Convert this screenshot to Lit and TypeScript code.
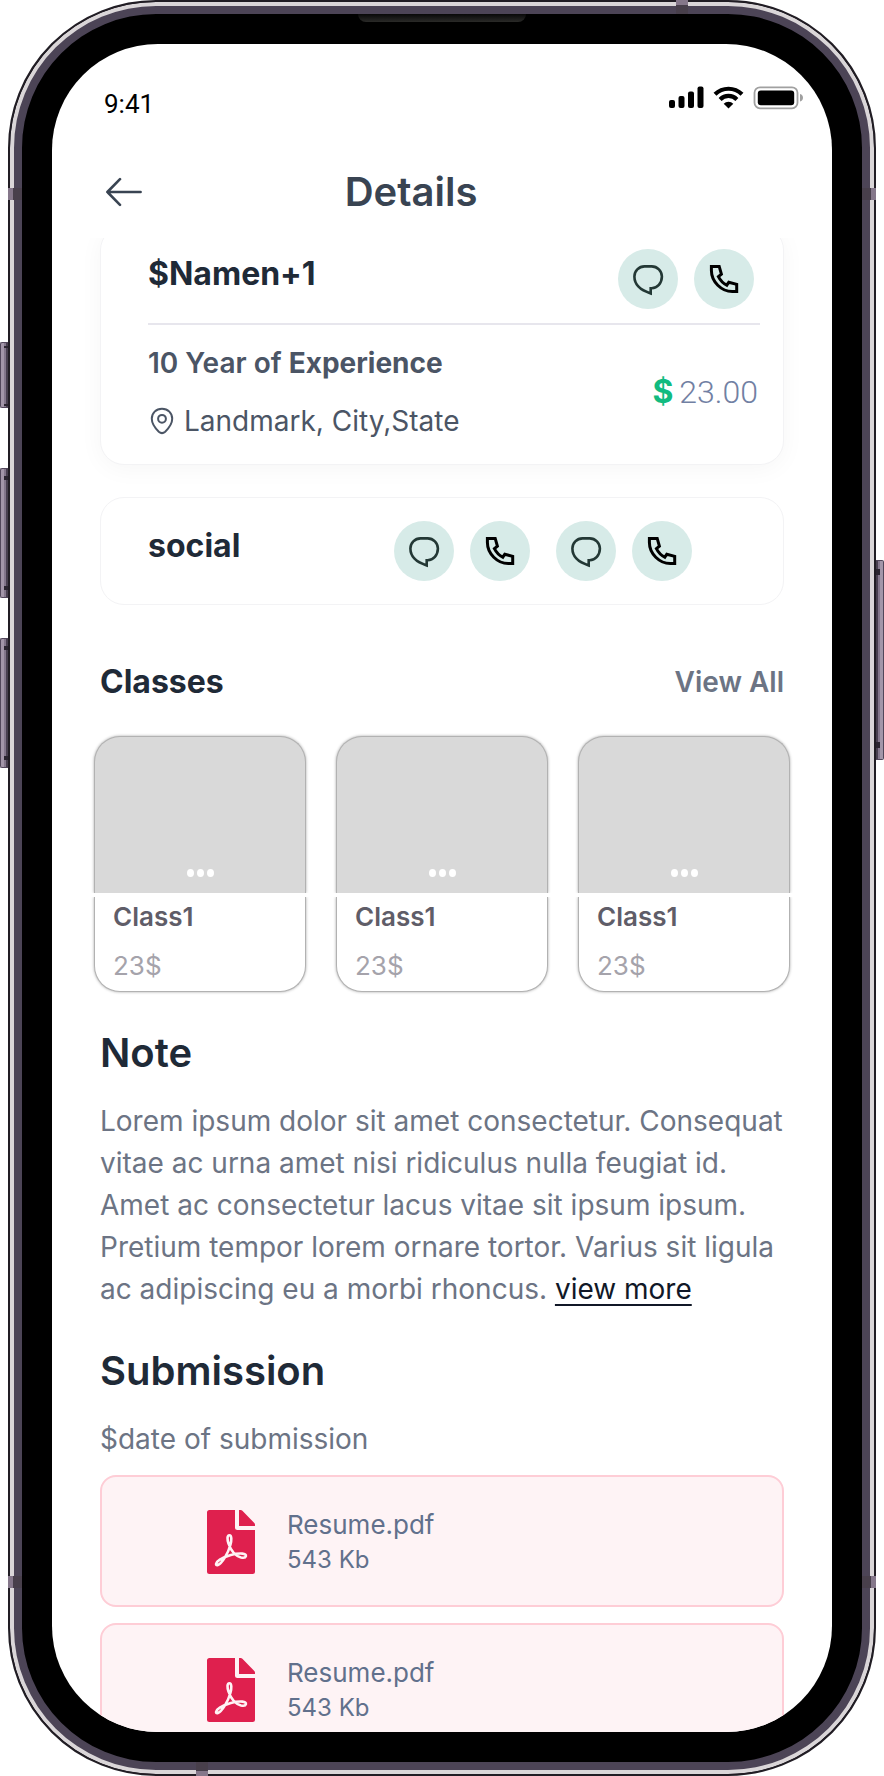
import { LitElement, html, css, svg } from "lit";
import { customElement, property } from "lit/decorators.js";

const chatGlyph = svg`<path
  d="M26.5 17.4h7.2a10.3 10.3 0 0 1 10.2 10.2c0 6.6-4.6 11.4-10.2 11.6h-1v5.2C23.5 41.6 16.4 36 16.4 27.6a10.1 10.1 0 0 1 10.1-10.2z"
  fill="none" stroke="#233835" stroke-width="2.6" />`;

const phoneGlyph = svg`<path
  d="M17.4 17.4h7.8l2.2 7.8-3 2.4c1.8 3.6 4.6 6.6 8.4 8.6l2-3 7.9 2.2v7.2h-4.4C27.4 42.6 17.4 32.8 17.4 21.6z"
  fill="none" stroke="#000" stroke-width="3" />`;

@customElement("contact-button")
export class ContactButton extends LitElement {
  @property() kind: "chat" | "phone" = "chat";

  static styles = css`
    :host {
      display: block;
    }
    .circle {
      display: block;
      width: 60px;
      height: 60px;
      padding: 0;
      border: 0;
      border-radius: 50%;
      background: #d7ebe8;
      cursor: pointer;
    }
    .glyph {
      display: block;
    }
  `;

  render() {
    const chat = this.kind === "chat";
    return html`<button class="circle" type="button" aria-label=${chat ? "Message" : "Call"}>
      <svg class="glyph" width="60" height="60" viewBox="0 0 60 60" aria-hidden="true">
        ${chat ? chatGlyph : phoneGlyph}
      </svg>
    </button>`;
  }
}

@customElement("class-card")
export class ClassCard extends LitElement {
  @property() name = "";
  @property() price = "";

  static styles = css`
    :host {
      display: block;
    }
    .thumb,
    .info {
      box-sizing: border-box;
      border: 1px solid #b2b2b2;
      box-shadow: 0 0 3px rgba(0, 0, 0, 0.35);
    }
    .thumb {
      display: flex;
      justify-content: center;
      align-items: flex-end;
      gap: 3px;
      height: 157px;
      padding-bottom: 16px;
      border-bottom: 0;
      border-radius: 26px 26px 0 0;
      background: #d9d9d9;
      clip-path: inset(-4px -4px 0 -4px);
    }
    .dot {
      width: 7px;
      height: 8px;
      border-radius: 50%;
      background: #fff;
    }
    .info {
      margin-top: 4px;
      padding: 0 18px 5px;
      border-top: 0;
      border-radius: 0 0 26px 26px;
      background: #fff;
      clip-path: inset(0 -4px -4px -4px);
    }
    .name,
    .price {
      margin: 0;
      font-size: 26px;
    }
    .name {
      line-height: 40px;
      font-weight: 600;
      color: #5f5d68;
    }
    .price {
      margin-top: 9px;
      line-height: 40px;
      color: #a5a3ab;
    }
  `;

  render() {
    return html`<div class="thumb">
        <span class="dot"></span><span class="dot"></span><span class="dot"></span>
      </div>
      <div class="info">
        <h3 class="name">${this.name}</h3>
        <p class="price">${this.price}</p>
      </div>`;
  }
}

@customElement("file-card")
export class FileCard extends LitElement {
  @property() name = "";
  @property() size = "";

  static styles = css`
    :host {
      display: block;
    }
    .file {
      display: flex;
      align-items: center;
      gap: 32px;
      box-sizing: border-box;
      padding: 30px 105px 28px;
      border: 2px solid #fecdd6;
      border-radius: 16px;
      background: #fef3f5;
      color: #61708c;
      text-decoration: none;
    }
    .label {
      display: flex;
      flex-direction: column;
    }
    .name {
      font-size: 26px;
      line-height: 36px;
    }
    .size {
      font-size: 24px;
      line-height: 34px;
    }
  `;

  render() {
    return html`<a class="file" href="#">
      <svg width="48" height="64" viewBox="0 0 48 64" aria-hidden="true">
        <path fill="#df204e" d="M2.5 0H28v17.5a2.5 2.5 0 0 0 2.5 2.5H48v41.5a2.5 2.5 0 0 1-2.5 2.5h-43A2.5 2.5 0 0 1 0 61.5v-59A2.5 2.5 0 0 1 2.5 0z" />
        <path fill="#df204e" d="M32 0h1.6c.7 0 1.3.3 1.8.8L47.3 13c.5.5.7 1.100.7 1.700V16H32z" />
        <path
          d="M22.4 25.200c-2.4 0-2.3 4.200-.9 8.400C23.800 40 28.500 46 34 47.400c5.800 1.300 6.800-3.400 1.400-3.800C28.500 43 19 45.800 12.800 49.600 8.400 52.400 8 56 10.900 55 15 53.500 21 43.500 23.400 35c1.300-5 1.400-9.800-1-9.800z"
          fill="none" stroke="#fef3f5" stroke-width="2.6" stroke-linejoin="round" />
      </svg>
      <span class="label">
        <span class="name">${this.name}</span>
        <span class="size">${this.size}</span>
      </span>
    </a>`;
  }
}

@customElement("app-root")
export class AppRoot extends LitElement {
  private classes = [
    { name: "Class1", price: "23$" },
    { name: "Class1", price: "23$" },
    { name: "Class1", price: "23$" },
  ];

  private files = [
    { name: "Resume.pdf", size: "543 Kb" },
    { name: "Resume.pdf", size: "543 Kb" },
  ];

  static styles = css`
    :host {
      display: block;
      position: relative;
      box-sizing: border-box;
      height: 100vh;
      padding: 0 8px;
      background: #fff;
      font-family: Inter, "Liberation Sans", sans-serif;
      color: #1f2a37;
    }

    /* Device body */
    .phone {
      box-sizing: border-box;
      height: 100%;
      padding: 42px;
      border: 2px solid #211d24;
      border-radius: 148px;
      background: #000;
      box-shadow:
        inset 0 0 0 4px #dad6d8,
        inset 0 0 0 12px #4c4456;
    }
    .screen {
      display: flex;
      flex-direction: column;
      height: 100%;
      overflow: hidden;
      border-radius: 106px;
      background: #fff;
    }
    .speaker {
      position: absolute;
      top: 14px;
      left: 50%;
      width: 168px;
      height: 8px;
      margin-left: -84px;
      border-radius: 0 0 8px 8px;
      background: linear-gradient(#080808, #2a2a28);
    }
    .band {
      position: absolute;
      background: linear-gradient(to right, #85778a 5px, #483f4b 5px);
    }
    .band.left,
    .band.right {
      width: 14px;
      height: 12px;
    }
    .band.left {
      left: 8px;
    }
    .band.right {
      right: 8px;
      background: linear-gradient(to left, #85778a 5px, #483f4b 5px);
    }
    .band.upper {
      top: 188px;
    }
    .band.lower {
      bottom: 188px;
    }
    .band.top,
    .band.bottom {
      width: 12px;
      height: 14px;
    }
    .band.top {
      top: 0;
      right: 196px;
      background: linear-gradient(to bottom, #85778a 5px, #483f4b 5px);
    }
    .band.bottom {
      bottom: 0;
      left: 196px;
      background: linear-gradient(to top, #85778a 5px, #483f4b 5px);
    }
    .key {
      position: absolute;
      box-sizing: border-box;
      width: 8px;
      border: 1px solid #51465a;
      border-radius: 2px 0 0 2px;
      border-right: 0;
      left: 0;
      background: linear-gradient(to right, #a396a9 3px, #83768b 3px, #83768b 5px, #483f4f 5px);
    }
    .key::before,
    .key::after {
      content: "";
      position: absolute;
      right: 0;
      width: 4px;
      height: 4px;
      background: #2b2530;
    }
    .key::before {
      top: 7px;
    }
    .key::after {
      bottom: 7px;
    }
    .key.mute {
      top: 342px;
      height: 66px;
    }
    .key.mute::before {
      top: 3px;
      height: 2px;
    }
    .key.mute::after {
      bottom: 1px;
      height: 2px;
    }
    .key.up {
      top: 468px;
      height: 130px;
    }
    .key.down {
      top: 638px;
      height: 130px;
    }
    .key.power {
      top: 560px;
      left: auto;
      right: 0;
      height: 200px;
      transform: scaleX(-1);
    }
    .key.power::before {
      top: 8px;
      height: 6px;
    }
    .key.power::after {
      bottom: 11px;
      height: 6px;
    }

    /* Status bar and header */
    .status {
      display: flex;
      justify-content: space-between;
      align-items: flex-start;
      padding: 40px 28px 0 52px;
      color: #000;
    }
    .time {
      font-family: Roboto, sans-serif;
      font-size: 26px;
      line-height: 40px;
    }
    .indicators {
      display: block;
      margin-top: 2px;
    }
    .header {
      display: flex;
      align-items: center;
      padding: 44px 152px 22px 54px;
      color: #394452;
    }
    .back {
      flex: none;
      width: 36px;
      height: 36px;
      padding: 0;
      border: 0;
      background: none;
      color: inherit;
      cursor: pointer;
    }
    .back svg {
      display: block;
    }
    .title {
      flex: 1;
      margin: 0;
      font-size: 40px;
      font-weight: 600;
      line-height: 48px;
      text-align: center;
    }

    /* Scrolled content */
    .content {
      flex: 1;
      min-height: 0;
      overflow: hidden;
      padding: 0 48px;
    }
    .card {
      border: 1px solid #f3f3f5;
      border-radius: 24px;
      background: #fff;
    }
    .profile {
      margin-top: -12px;
      padding: 22px 23px 22px 47px;
      box-shadow: 0 4px 24px rgba(0, 0, 0, 0.04);
    }
    .profile-head {
      display: flex;
      justify-content: space-between;
      align-items: center;
      padding: 0 6px 14px 0;
      border-bottom: 2px solid #e7e6ed;
    }
    .name {
      margin: 0;
      padding-bottom: 10px;
      font-size: 32px;
      font-weight: 700;
      line-height: 40px;
    }
    .pair {
      display: flex;
      gap: 16px;
    }
    .profile-body {
      display: flex;
      justify-content: space-between;
      align-items: center;
      padding-top: 17px;
      color: #4b5565;
      font-size: 28px;
      line-height: 42px;
    }
    .line {
      margin: 0;
    }
    .experience {
      font-weight: 600;
    }
    .experience strong {
      font-weight: 700;
    }
    .place {
      display: flex;
      align-items: center;
      gap: 10px;
      margin-top: 16px;
      padding-left: 2px;
    }
    .rate {
      display: flex;
      gap: 6px;
      padding-right: 2px;
      font-family: Roboto, sans-serif;
      font-size: 32px;
      font-weight: 300;
      color: #7180a3;
    }
    .currency {
      font-family: Inter, sans-serif;
      font-weight: 700;
      color: #12bb80;
    }
    .social {
      display: flex;
      justify-content: space-between;
      align-items: center;
      margin-top: 32px;
      padding: 23px 91px 23px 47px;
    }
    .social-actions {
      display: flex;
      gap: 26px;
    }

    .section-head {
      display: flex;
      justify-content: space-between;
      align-items: center;
      margin-top: 57px;
    }
    .section-title {
      margin: 0;
      font-size: 32px;
      font-weight: 700;
      line-height: 40px;
    }
    .view-all {
      font-size: 28px;
      font-weight: 600;
      line-height: 40px;
      color: #6c7484;
      text-decoration: none;
    }
    .classes {
      display: grid;
      grid-template-columns: repeat(3, 1fr);
      gap: 30px;
      margin: 34px -6px 0;
    }

    .heading {
      margin: 37px 0 0;
      font-size: 40px;
      font-weight: 600;
      line-height: 48px;
    }
    .text {
      margin: 23px 0 0;
      font-size: 28px;
      line-height: 42px;
      color: #6c7484;
    }
    .more {
      color: #111827;
      text-decoration: underline 2px;
      text-underline-offset: 5px;
    }
    .files {
      display: grid;
      gap: 16px;
      margin-top: 15px;
    }
  `;

  render() {
    return html`
      <div class="phone">
        <main class="screen">
          <div class="status">
            <span class="time">9:41</span>
            <svg class="indicators" width="135" height="24" viewBox="0 0 135 24" aria-hidden="true">
              <rect x="0" y="14" width="6" height="8" rx="2" />
              <rect x="9.5" y="10" width="6" height="12" rx="2" />
              <rect x="19" y="5.5" width="6" height="16.5" rx="2" />
              <rect x="28.5" y="0.5" width="6" height="21.5" rx="2" />
              <g fill="none" stroke="#000" stroke-width="4.2">
                <path d="M46 8.200a19.500 19.500 0 0 1 27 0" />
                <path d="M51.100 13.400a12 12 0 0 1 16.800 0" />
              </g>
              <path d="M59.500 22.500l-4.800-4.700a6.800 6.800 0 0 1 9.600 0z" />
              <rect x="85.500" y="1.300" width="43" height="21" rx="5.500" fill="none" stroke="#a0a0a0" stroke-width="1.800" />
              <rect x="88.800" y="4.600" width="36.400" height="14.600" rx="3" />
              <path d="M131 8c2.200.6 3 2 3 3.800s-.8 3.200-3 3.800z" fill="#a0a0a0" />
            </svg>
          </div>

          <header class="header">
            <button class="back" type="button" aria-label="Back">
              <svg width="36" height="36" viewBox="0 0 36 36" fill="none" stroke="currentColor"
                stroke-width="2.6" stroke-linecap="round" stroke-linejoin="round" aria-hidden="true">
                <path d="M34.600 18H1.400M14 5.200L1.400 18 14 30.800" />
              </svg>
            </button>
            <h1 class="title">Details</h1>
          </header>

          <div class="content">
            <section class="card profile">
              <div class="profile-head">
                <h2 class="name">$Namen+1</h2>
                <div class="pair">
                  <contact-button kind="chat"></contact-button>
                  <contact-button kind="phone"></contact-button>
                </div>
              </div>
              <div class="profile-body">
                <div>
                  <p class="line experience">10 Year of <strong>Experience</strong></p>
                  <p class="line place">
                    <svg width="24" height="28" viewBox="0 0 24 28" fill="none" stroke="currentColor"
                      stroke-width="2" aria-hidden="true">
                      <path d="M12 1.800c6 0 10.200 4.200 10.200 10 0 5.200-3.600 9.600-7 12.900-1.900 1.700-4.500 1.700-6.400 0C5.400 21.400 1.800 17 1.800 11.800c0-5.800 4.200-10 10.200-10z" />
                      <circle cx="12" cy="11.800" r="3.900" />
                    </svg>
                    Landmark, City,State
                  </p>
                </div>
                <div class="rate"><span class="currency">$</span><span>23.00</span></div>
              </div>
            </section>

            <section class="card social">
              <h2 class="name">social</h2>
              <div class="social-actions">
                <div class="pair">
                  <contact-button kind="chat"></contact-button>
                  <contact-button kind="phone"></contact-button>
                </div>
                <div class="pair">
                  <contact-button kind="chat"></contact-button>
                  <contact-button kind="phone"></contact-button>
                </div>
              </div>
            </section>

            <div class="section-head">
              <h2 class="section-title">Classes</h2>
              <a class="view-all" href="#">View All</a>
            </div>
            <div class="classes">
              ${this.classes.map(
                (c) => html`<class-card name=${c.name} price=${c.price}></class-card>`
              )}
            </div>

            <h2 class="heading">Note</h2>
            <p class="text">
              Lorem ipsum dolor sit amet consectetur. Consequat vitae ac urna amet nisi ridiculus
              nulla feugiat id. Amet ac consectetur lacus vitae sit ipsum ipsum. Pretium tempor
              lorem ornare tortor. Varius sit ligula ac adipiscing eu a morbi rhoncus.
              <a class="more" href="#">view more</a>
            </p>

            <h2 class="heading">Submission</h2>
            <p class="text">$date of submission</p>
            <div class="files">
              ${this.files.map((f) => html`<file-card name=${f.name} size=${f.size}></file-card>`)}
            </div>
          </div>
        </main>
      </div>

      <div class="speaker"></div>
      <div class="band left upper"></div>
      <div class="band left lower"></div>
      <div class="band right upper"></div>
      <div class="band right lower"></div>
      <div class="band top"></div>
      <div class="band bottom"></div>
      <div class="key mute"></div>
      <div class="key up"></div>
      <div class="key down"></div>
      <div class="key power"></div>
    `;
  }
}
